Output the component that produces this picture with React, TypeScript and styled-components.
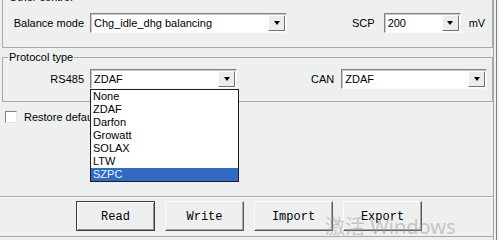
import React from 'react'
import styled, { createGlobalStyle } from 'styled-components'

const GlobalStyle = createGlobalStyle`
  html, body {
    margin: 0;
    padding: 0;
    background: #eef0ef;
  }
  body {
    font-family: 'Liberation Sans', Arial, sans-serif;
    font-size: 11px;
    color: #000;
  }
`

const protocols = ['None', 'ZDAF', 'Darfon', 'Growatt', 'SOLAX', 'LTW', 'SZPC']
const selectedProtocol = 'SZPC'

const Window = styled.div`
  position: relative;
  width: 499px;
  height: 240px;
  overflow: hidden;
  display: flex;
  background: #eef0ef;
`

const Panel = styled.div`
  flex: 0 0 493px;
  display: flex;
  flex-direction: column;
`

const Edge = styled.div`
  width: 2px;
  border-left: 1px solid #a3a8a8;
  border-right: 1px solid #7d8282;
`

const Group = styled.fieldset<{ $top: number; $pad: string }>`
  margin: ${(p) => p.$top}px 0 0 2px;
  padding: ${(p) => p.$pad};
  border: 1px solid #a5aaaa;
  min-inline-size: 0;
`

const Legend = styled.legend`
  margin-left: 5px;
  padding: 0 1px;
  font-size: 11px;
  line-height: 13px;
`

const Row = styled.div`
  display: flex;
  align-items: center;
  height: 20px;
`

const Label = styled.span<{ $width?: number; $left?: number; $gap: number }>`
  ${(p) => (p.$width ? `width: ${p.$width}px; text-align: right;` : '')}
  margin-left: ${(p) => p.$left ?? 0}px;
  margin-right: ${(p) => p.$gap}px;
  white-space: nowrap;
`

const Unit = styled.span`
  margin-left: 8px;
`

const Combo = styled.div<{ $width: number }>`
  position: relative;
  box-sizing: border-box;
  width: ${(p) => p.$width}px;
  height: 20px;
  display: flex;
  align-items: center;
  background: #fff;
  border: 1px solid;
  border-color: #7e8383 #f7f8f8 #f7f8f8 #7e8383;
  box-shadow: inset 1px 1px 0 #c4c8c8;
`

const ComboValue = styled.span`
  flex: 1;
  padding-left: 3px;
  white-space: nowrap;
  overflow: hidden;
`

const ArrowButton = styled.span`
  box-sizing: border-box;
  width: 17px;
  height: 16px;
  margin-right: 1px;
  display: flex;
  align-items: center;
  justify-content: center;
  background: #eceeee;
  border: 1px solid;
  border-color: #fdfdfd #6e7373 #6e7373 #fdfdfd;
`

const Triangle = styled.span`
  width: 0;
  height: 0;
  border-left: 3.5px solid transparent;
  border-right: 3.5px solid transparent;
  border-top: 4px solid #000;
`

const List = styled.ul`
  position: absolute;
  z-index: 2;
  top: 19px;
  left: -1px;
  width: 149px;
  box-sizing: border-box;
  margin: 0;
  padding: 0;
  list-style: none;
  background: #fff;
  border: 1px solid #1c1f1f;
`

const Item = styled.li<{ $active?: boolean }>`
  height: 13px;
  line-height: 13px;
  padding-left: 2px;
  background: ${(p) => (p.$active ? '#3169c6' : 'transparent')};
  color: ${(p) => (p.$active ? '#e6f4ff' : '#000')};
`

const CheckRow = styled.label`
  display: flex;
  align-items: center;
  gap: 7px;
  margin: 9px 0 0 5px;
  white-space: nowrap;
`

const CheckBox = styled.span`
  box-sizing: border-box;
  width: 12px;
  height: 12px;
  background: #fff;
  border: 1px solid;
  border-color: #7e8383 #e4e7e7 #e4e7e7 #7e8383;
`

const Footer = styled.div`
  margin-top: auto;
  margin-bottom: 3px;
  padding: 4px 0 5px 76px;
  display: flex;
  gap: 10px;
  border-top: 1px solid #a5aaaa;
  border-bottom: 1px solid #a5aaaa;
  box-shadow: inset 0 1px 0 #fff;
`

const Button = styled.button<{ $default?: boolean }>`
  box-sizing: border-box;
  width: 79px;
  height: 30px;
  padding: 2px 0 0;
  font-family: 'Liberation Mono', 'Courier New', monospace;
  font-size: 12px;
  color: #000;
  background: #eef0f0;
  border: 1px solid;
  border-color: ${(p) =>
    p.$default ? '#3a3e3e' : '#fbfcfc #555a5a #555a5a #fbfcfc'};
  box-shadow: ${(p) =>
    p.$default
      ? 'inset 1px 1px 0 #fff, inset -1px -1px 0 #8a8f8f'
      : 'inset -1px -1px 0 #a3a8a8'};
`

const Watermark = styled.div`
  position: absolute;
  left: 325px;
  top: 215px;
  font-family: 'Noto Sans', 'Noto Sans CJK SC', sans-serif;
  font-size: 20px;
  line-height: 24px;
  color: rgba(150, 156, 156, 0.5);
  white-space: nowrap;
  pointer-events: none;
`

function Select({
  width,
  value,
  children,
}: {
  width: number
  value: string
  children?: React.ReactNode
}) {
  return (
    <Combo $width={width}>
      <ComboValue>{value}</ComboValue>
      <ArrowButton>
        <Triangle />
      </ArrowButton>
      {children}
    </Combo>
  )
}

export default function App() {
  return (
    <Window>
      <GlobalStyle />
      <Panel>
        <Group $top={-9} $pad="9px 0 14px 0">
          <Legend>Other control</Legend>
          <Row>
            <Label $width={81} $gap={6}>
              Balance mode
            </Label>
            <Select width={197} value="Chg_idle_dhg balancing" />
            <Label $left={65} $gap={9}>
              SCP
            </Label>
            <Select width={77} value="200" />
            <Unit>mV</Unit>
          </Row>
        </Group>

        <Group $top={3} $pad="5px 0 12px 0">
          <Legend>Protocol type</Legend>
          <Row>
            <Label $width={81} $gap={6}>
              RS485
            </Label>
            <Select width={147} value="ZDAF">
              <List>
                {protocols.map((p) => (
                  <Item key={p} $active={p === selectedProtocol}>
                    {p}
                  </Item>
                ))}
              </List>
            </Select>
            <Label $left={74} $gap={7}>
              CAN
            </Label>
            <Select width={146} value="ZDAF" />
          </Row>
        </Group>

        <CheckRow>
          <CheckBox />
          Restore default settings
        </CheckRow>

        <Footer>
          <Button $default>Read</Button>
          <Button>Write</Button>
          <Button>Import</Button>
          <Button>Export</Button>
        </Footer>
      </Panel>
      <Edge />
      <Watermark>激活 Windows</Watermark>
    </Window>
  )
}
